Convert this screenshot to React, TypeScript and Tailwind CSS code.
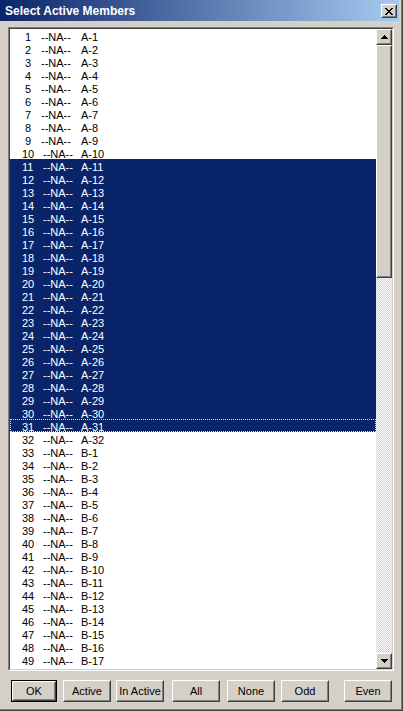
import React from "react";

const FONT = { fontFamily: '"Liberation Sans", Arial, sans-serif' };

function Bevel({ children, className = "" }: { children?: React.ReactNode; className?: string }) {
  return (
    <div className={`border border-t-white border-l-white border-r-[#404040] border-b-[#404040] bg-[#d4d0c8] ${className}`}>
      <div className="w-full h-full border border-t-[#d4d0c8] border-l-[#d4d0c8] border-r-[#808080] border-b-[#808080] flex items-center justify-center">
        {children}
      </div>
    </div>
  );
}

function Arrow({ up }: { up: boolean }) {
  return (
    <svg width="7" height="4" viewBox="0 0 7 4" shapeRendering="crispEdges">
      {up ? (
        <>
          <rect x="3" y="0" width="1" height="1" fill="#000" />
          <rect x="2" y="1" width="3" height="1" fill="#000" />
          <rect x="1" y="2" width="5" height="1" fill="#000" />
          <rect x="0" y="3" width="7" height="1" fill="#000" />
        </>
      ) : (
        <>
          <rect x="0" y="0" width="7" height="1" fill="#000" />
          <rect x="1" y="1" width="5" height="1" fill="#000" />
          <rect x="2" y="2" width="3" height="1" fill="#000" />
          <rect x="3" y="3" width="1" height="1" fill="#000" />
        </>
      )}
    </svg>
  );
}

function CloseX() {
  const px: [number, number, number][] = [
    [0, 0, 2], [6, 0, 2],
    [1, 1, 2], [5, 1, 2],
    [2, 2, 4],
    [3, 3, 2],
    [2, 4, 4],
    [1, 5, 2], [5, 5, 2],
    [0, 6, 2], [6, 6, 2],
  ];
  return (
    <svg width="8" height="7" viewBox="0 0 8 7" shapeRendering="crispEdges">
      {px.map(([x, y, w], i) => (
        <rect key={i} x={x} y={y} width={w} height="1" fill="#000" />
      ))}
    </svg>
  );
}

function Row({ n }: { n: number }) {
  const name = n <= 32 ? `A-${n}` : `B-${n - 32}`;
  const sel = n >= 11 && n <= 31;
  const focus = n === 31;
  const single = n < 10;
  return (
    <div
      className={`flex h-[13px] shrink-0 leading-[16px] whitespace-nowrap text-[11px] ${
        sel ? "bg-[#0a246a] text-white" : "text-black"
      } ${focus ? "outline-1 outline-dotted outline-[#f3e3a0] -outline-offset-1" : ""}`}
    >
      <span className={single ? "w-[31px] pl-[15px] shrink-0" : "w-[33px] pl-[12px] shrink-0"}>{n}</span>
      <span className={single ? "w-[40px] shrink-0" : "w-[38px] shrink-0"}>--NA--</span>
      <span>{name}</span>
    </div>
  );
}

function Btn({ label, className, isDefault }: { label: string; className: string; isDefault?: boolean }) {
  if (isDefault) {
    return (
      <div className={`border border-black ${className}`}>
        <Bevel className="w-full h-full">
          <span className="text-[11px] text-black leading-none">{label}</span>
        </Bevel>
      </div>
    );
  }
  return (
    <Bevel className={className}>
      <span className="text-[11px] text-black leading-none whitespace-nowrap">{label}</span>
    </Bevel>
  );
}

export default function App() {
  const rows = Array.from({ length: 50 }, (_, i) => i + 1);
  return (
    <div style={FONT} className="w-[403px] h-[711px] bg-[#d4d0c8] border-r border-b border-r-[#404040] border-b-[#404040] overflow-hidden">
      <div className="w-full h-full border-r border-b border-r-[#808080] border-b-[#808080] flex flex-col">
        <div className="h-[21px] mr-[2px] flex items-center bg-[linear-gradient(to_right,#0a246a,#a6caf0)] shrink-0">
          <span className="ml-[5px] text-[12px] font-bold text-white leading-none pt-[1px]">Select Active Members</span>
          <div className="ml-auto mr-[2px] mt-[1px]">
            <Bevel className="w-[16px] h-[14px]">
              <CloseX />
            </Bevel>
          </div>
        </div>

        <div className="ml-[8px] mt-[6px] w-[386px] h-[644px] shrink-0 border border-t-[#808080] border-l-[#808080] border-r-white border-b-white">
          <div className="w-full h-full border border-t-[#404040] border-l-[#404040] border-r-[#d4d0c8] border-b-[#d4d0c8] bg-white flex">
            <div className="flex-1 overflow-hidden flex flex-col">
              {rows.map((n) => (
                <Row key={n} n={n} />
              ))}
            </div>
            <div className="w-[16px] flex flex-col shrink-0">
              <Bevel className="h-[16px] shrink-0">
                <Arrow up />
              </Bevel>
              <Bevel className="h-[233px] shrink-0" />
              <div className="flex-1 bg-[repeating-conic-gradient(#d4d0c8_0%_25%,#ffffff_0%_50%)] bg-[length:2px_2px]" />
              <Bevel className="h-[16px] shrink-0">
                <Arrow up={false} />
              </Bevel>
            </div>
          </div>
        </div>

        <div className="mt-[9px] flex h-[22px] shrink-0">
          <Btn label="OK" isDefault className="ml-[11px] w-[46px] h-[22px]" />
          <Btn label="Active" className="ml-[6px] w-[48px] h-[22px]" />
          <Btn label="In Active" className="ml-[5px] w-[48px] h-[22px]" />
          <Btn label="All" className="ml-[8px] w-[48px] h-[22px]" />
          <Btn label="None" className="ml-[7px] w-[48px] h-[22px]" />
          <Btn label="Odd" className="ml-[6px] w-[48px] h-[22px]" />
          <Btn label="Even" className="ml-[15px] w-[48px] h-[22px]" />
        </div>
      </div>
    </div>
  );
}
